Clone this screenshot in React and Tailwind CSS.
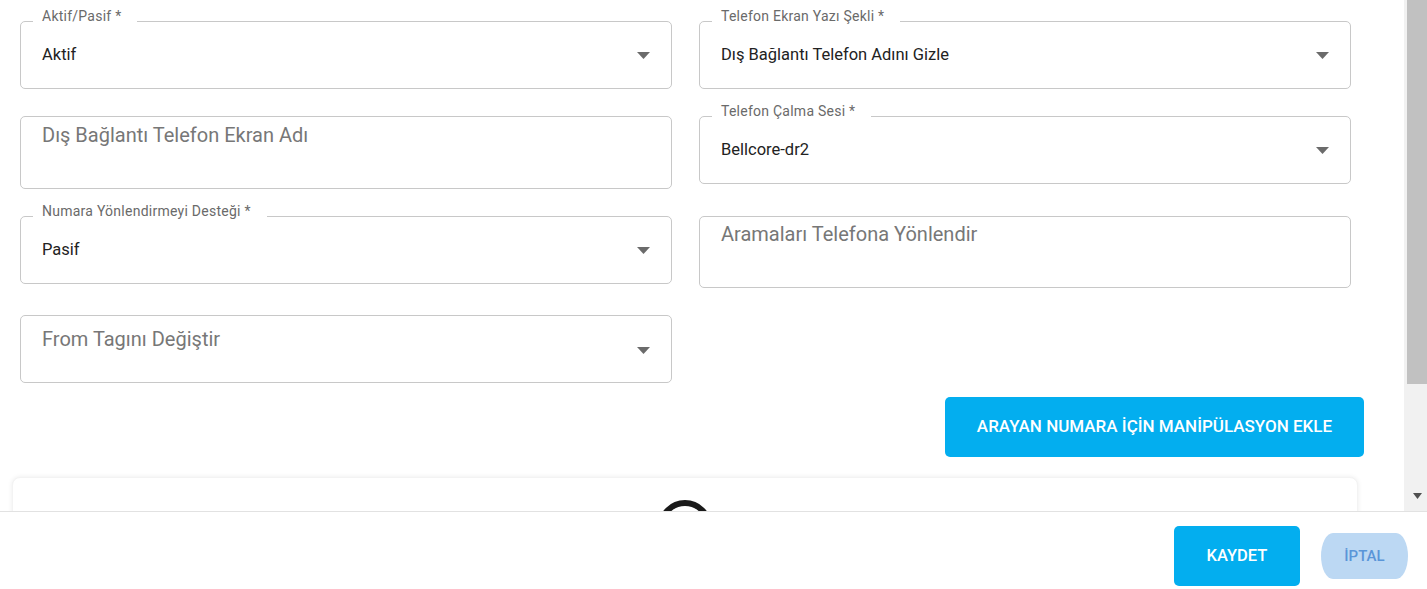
import React from 'react';

function Arrow() {
  return (
    <svg width="13" height="7" viewBox="0 0 13 7" className="block">
      <path d="M0 0h13L6.5 7z" fill="#6b6b6b" />
    </svg>
  );
}

function SelectField({ label, value }) {
  return (
    <div className="relative h-[68px] rounded-[5px] border border-[#c8c8c8]">
      <span className="absolute -top-[13px] left-[12px] bg-white pl-[9px] pr-[16px] text-[14px] tracking-[0.25px] leading-[15px] text-[#6a6a6a] whitespace-nowrap">
        {label}
      </span>
      <div className="h-full flex items-center justify-between pl-[21px] pr-[21px]">
        <span className="text-[16.5px] leading-[20px] text-[#222]">{value}</span>
        <Arrow />
      </div>
    </div>
  );
}

function TextField({ placeholder, height, pt, arrow }) {
  return (
    <div className={`relative ${height} rounded-[5px] border border-[#c8c8c8] pl-[21px] pr-[21px] ${pt}`}>
      <span className="block text-[20px] leading-[23px] text-[#777]">{placeholder}</span>
      {arrow && (
        <div className="absolute right-[21px] top-0 bottom-0 flex items-center pt-[2px]">
          <Arrow />
        </div>
      )}
    </div>
  );
}

export default function App() {
  return (
    <div className="w-[1427px] h-[589px] overflow-hidden bg-white flex flex-col" style={{ fontFamily: 'Roboto, "Liberation Sans", sans-serif' }}>
      {/* Scroll area */}
      <div className="h-[511px] flex">
        <div className="flex-1 overflow-hidden">
          <div className="pl-[20px] pt-[21px]">
            <div className="grid grid-cols-[652px_652px] gap-x-[27px] gap-y-[27px] items-start">
              <SelectField label="Aktif/Pasif *" value="Aktif" />
              <SelectField label="Telefon Ekran Yazı Şekli *" value="Dış Bağlantı Telefon Adını Gizle" />
              <TextField placeholder="Dış Bağlantı Telefon Ekran Adı" height="h-[73px]" pt="pt-[7px]" />
              <SelectField label="Telefon Çalma Sesi *" value="Bellcore-dr2" />
              <SelectField label="Numara Yönlendirmeyi Desteği *" value="Pasif" />
              <TextField placeholder="Aramaları Telefona Yönlendir" height="h-[72px]" pt="pt-[6px]" />
              <TextField placeholder="From Tagını Değiştir" height="h-[68px]" pt="pt-[12px]" arrow />
            </div>
          </div>

          <div className="flex justify-end pr-[40px] mt-[14px]">
            <button className="w-[419px] h-[60px] rounded-[5px] bg-[#03aeef] text-white text-[17px] font-medium">
              ARAYAN NUMARA İÇİN MANİPÜLASYON EKLE
            </button>
          </div>

          <div className="ml-[12px] mr-[46px] mt-[20px] h-[80px] rounded-[8px] bg-white shadow-[0_0_5px_rgba(0,0,0,0.08)] border border-[#f3f3f3] flex justify-center pt-[22px]">
            <div className="w-[54px] h-[54px] rounded-full border-[6px] border-[#1a1a1a]" />
          </div>
        </div>

        {/* Scrollbar */}
        <div className="w-[23px] bg-[#f1f1f1] flex flex-col">
          <div className="h-[384px] ml-[3px] bg-[#c1c1c1]" />
          <div className="flex-1 flex items-end justify-center pb-[12px] pl-[3px]">
            <svg width="9" height="6" viewBox="0 0 9 6">
              <path d="M0 0h9L4.5 6z" fill="#505050" />
            </svg>
          </div>
        </div>
      </div>

      {/* Footer */}
      <div className="flex-1 border-t border-[#e2e2e2] bg-white flex justify-end items-start pt-[14px] pr-[19px] gap-[21px]">
        <button className="w-[126px] h-[60px] rounded-[5px] bg-[#03aeef] text-white text-[16.5px] font-medium">
          KAYDET
        </button>
        <button className="mt-[7px] w-[87px] h-[46px] rounded-[12px/23px] bg-[#bcd8f3] text-[#5a95d8] text-[15px] font-medium">
          İPTAL
        </button>
      </div>
    </div>
  );
}
